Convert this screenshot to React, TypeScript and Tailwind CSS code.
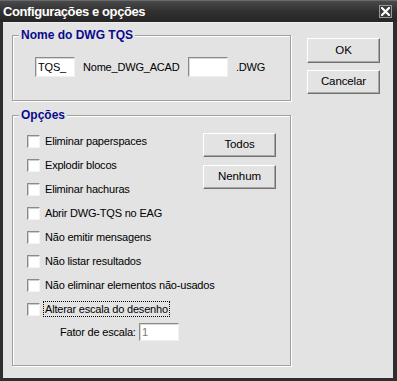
import React from "react";

const Checkbox = () => (
  <div className="w-[13px] h-[13px] shrink-0 bg-white border border-t-[#8a8a8a] border-l-[#8a8a8a] border-b-[#f4f4f4] border-r-[#f4f4f4] shadow-[inset_1px_1px_0_#cfcfcf]" />
);

const Button = ({ label, h = "h-[25px]" }: { label: string; h?: string }) => (
  <div
    className={`w-[73px] ${h} flex items-center justify-center bg-[#e3e3e3] border border-t-white border-l-white border-b-[#707070] border-r-[#707070] shadow-[inset_-1px_-1px_0_#a8a8a8] text-[11.5px] tracking-[-0.1px] text-black`}
  >
    {label}
  </div>
);

const Group = ({
  title,
  className,
  children,
}: {
  title: string;
  className: string;
  children: React.ReactNode;
}) => (
  <div
    className={`relative border border-[#a0a0a0] shadow-[inset_1px_1px_0_#ffffff,1px_1px_0_#ffffff] ${className}`}
  >
    <span className="absolute -top-[9px] left-[6px] whitespace-nowrap bg-[#e3e3e3] px-[2px] text-[12px] leading-[16px] font-bold text-[#0a0a8c]">
      {title}
    </span>
    {children}
  </div>
);

const options = [
  "Eliminar paperspaces",
  "Explodir blocos",
  "Eliminar hachuras",
  "Abrir DWG-TQS no EAG",
  "Não emitir mensagens",
  "Não listar resultados",
  "Não eliminar elementos não-usados",
  "Alterar escala do desenho",
];

const inputCls =
  "bg-white border border-t-[#8a8a8a] border-l-[#8a8a8a] border-b-[#f0f0f0] border-r-[#f0f0f0] shadow-[inset_1px_1px_0_#d8d8d8]";

export default function App() {
  return (
    <div className="w-[397px] h-[381px] flex flex-col bg-[#2e2e2e] font-['Liberation_Sans',Arial,sans-serif] text-black select-none">
      {/* Title bar */}
      <div className="h-[22px] flex items-center justify-between pl-[3px] pr-[4px] bg-gradient-to-b from-[#4a4a4a] via-[#303030] to-[#262626] border-t border-[#6a6a6a]">
        <span className="text-white font-bold text-[13px] tracking-[-0.4px] leading-none -mt-[1px]">
          Configurações e opções
        </span>
        <div className="w-[13px] h-[13px] mr-[1px] bg-[#3a3a3a] border border-[#9a9a9a] flex items-center justify-center">
          <svg width="9" height="9" viewBox="0 0 9 9">
            <path d="M1 1 L8 8 M8 1 L1 8" stroke="white" strokeWidth="2.2" strokeLinecap="square" />
          </svg>
        </div>
      </div>
      {/* Body */}
      <div className="flex-1 pl-[3px] pr-[4px] pb-[3px]">
        <div className="h-full bg-[#e3e3e3] border-t border-[#f0f0f0] flex pl-[9px] pt-[12px]">
          {/* Left column */}
          <div className="w-[279px] flex flex-col">
            <Group title="Nome do DWG TQS" className="h-[66px]">
              <div className="flex items-center pl-[22px] pt-[21px] text-[11px] tracking-[-0.2px]">
                <div className={`w-[40px] h-[20px] ${inputCls} flex items-center pl-[2px] leading-none`}>
                  TQS_
                </div>
                <span className="w-[113px] pl-[8px] whitespace-nowrap">Nome_DWG_ACAD</span>
                <div className={`w-[40px] h-[20px] ${inputCls}`} />
                <span className="pl-[8px]">.DWG</span>
              </div>
            </Group>
            <Group title="Opções" className="h-[251px] mt-[14px]">
              <div className="flex pl-[14px] pt-[13px]">
                <div className="w-[176px] flex flex-col text-[11px] tracking-[-0.2px]">
                  {options.map((o, i) => (
                    <div key={o} className="h-[24px] flex items-center whitespace-nowrap">
                      <Checkbox />
                      <span
                        className={`ml-[3px] px-[1px] leading-[14px] border ${
                          i === options.length - 1 ? "border-dotted border-black" : "border-transparent"
                        }`}
                      >
                        {o}
                      </span>
                    </div>
                  ))}
                  <div className="flex items-center mt-[2px] h-[18px] whitespace-nowrap">
                    <span className="ml-[33px] w-[79px]">Fator de escala:</span>
                    <div className={`w-[40px] h-[18px] ${inputCls} flex items-center pl-[2px] text-[#7a7a7a] leading-none`}>
                      1
                    </div>
                  </div>
                </div>
                <div className="flex flex-col gap-[8px] pt-[4px]">
                  <Button label="Todos" h="h-[24px]" />
                  <Button label="Nenhum" h="h-[24px]" />
                </div>
              </div>
            </Group>
          </div>
          {/* Right column */}
          <div className="flex flex-col gap-[7px] ml-[16px] pt-[3px]">
            <Button label="OK" />
            <Button label="Cancelar" h="h-[24px]" />
          </div>
        </div>
      </div>
    </div>
  );
}
